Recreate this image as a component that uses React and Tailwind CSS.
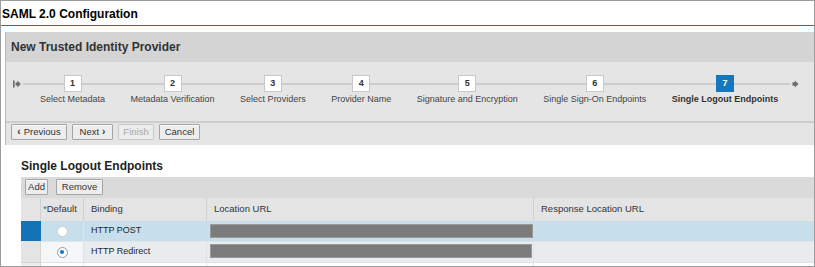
import React from "react";

const steps = [
  { n: 1, label: "Select Metadata" },
  { n: 2, label: "Metadata Verification" },
  { n: 3, label: "Select Providers" },
  { n: 4, label: "Provider Name" },
  { n: 5, label: "Signature and Encryption" },
  { n: 6, label: "Single Sign-On Endpoints" },
  { n: 7, label: "Single Logout Endpoints", active: true },
];

const StartIcon = () => (
  <svg width="8" height="8" viewBox="0 0 8 8" className="shrink-0">
    <rect x="0" y="0.5" width="1.6" height="7" fill="#6b6b6b" />
    <path d="M2.6 2.6 H4.4 V0.6 L7.8 4 L4.4 7.4 V5.4 H2.6 Z" fill="#6b6b6b" />
  </svg>
);

const EndIcon = () => (
  <svg width="7" height="8" viewBox="0 0 7 8" className="shrink-0">
    <path d="M0.5 2.2 H2.8 V0.6 L6.5 4 L2.8 7.4 V5.8 H0.5 Z" fill="#6b6b6b" />
  </svg>
);

const Btn = ({ children, className = "", disabled }) => (
  <button
    className={
      "h-[16px] flex items-center justify-center border rounded-[1px] text-[9.5px] leading-none " +
      (disabled
        ? "border-[#c9c9c9] bg-[#ececec] text-[#a8a8a8] "
        : "border-[#a6a6a6] bg-[#ededed] text-[#333] shadow-[inset_0_1px_0_#fafafa] ") +
      className
    }
  >
    {children}
  </button>
);

const Radio = ({ checked }) => (
  <span
    className={
      "w-[11px] h-[11px] rounded-full bg-white border flex items-center justify-center " +
      (checked ? "border-[#9b9b9b]" : "border-[#cfcfcf]")
    }
  >
    {checked && <span className="w-[4px] h-[4px] rounded-full bg-[#1a73b8]" />}
  </span>
);

export default function App() {
  return (
    <div className="w-[815px] h-[267px] overflow-hidden border border-[#9c9c9c] bg-white font-['Liberation_Sans',Arial,sans-serif] text-[#333]">
      <div className="h-[24px] pl-[1px] pt-[6px] text-[12px] font-bold leading-[14px] text-black">
        SAML 2.0 Configuration
      </div>
      <div className="h-[1px] bg-[#1a70b9]" />

      {/* wizard panel */}
      <div className="mt-[6px] ml-[4px] border-l border-[#b8b8b8]">
        <div className="h-[30px] bg-[#d4d4d4] flex items-center pl-[5px] text-[12px] font-bold text-[#333]">
          New Trusted Identity Provider
        </div>
        <div className="bg-[#e5e5e5]">
          <div className="relative h-[59px]">
            <div className="absolute left-[7px] right-[15px] top-[18px] h-[8px] flex items-center">
              <StartIcon />
              <div className="flex-1 h-[2px] bg-[#cdcdcd] mx-[2px]" />
              <EndIcon />
            </div>
            <div className="relative flex pl-[34px] pt-[13px] gap-[25.5px]">
              {steps.map((s) => (
                <div key={s.n} className="flex flex-col items-center">
                  <div
                    className={
                      "w-[18px] h-[17px] border flex items-center justify-center text-[9px] font-bold " +
                      (s.active
                        ? "bg-[#1677bd] border-[#1677bd] text-white"
                        : "bg-white border-[#c8c8c8] text-[#333]")
                    }
                  >
                    {s.n}
                  </div>
                  <div
                    className={
                      "mt-[2px] text-[9px] leading-[11px] whitespace-nowrap " +
                      (s.active ? "font-bold text-[#333]" : "text-[#444]")
                    }
                  >
                    {s.label}
                  </div>
                </div>
              ))}
            </div>
          </div>
          <div className="border-t-2 border-[#cdcdcd] h-[24px] flex items-start pt-[1px] pl-[5px] gap-[5px]">
            <Btn className="w-[56px] gap-[3px]">
              <span className="font-bold text-[10px]">‹</span>Previous
            </Btn>
            <Btn className="w-[41px] gap-[3px]">
              Next<span className="font-bold text-[10px]">›</span>
            </Btn>
            <Btn className="w-[36px]" disabled>
              Finish
            </Btn>
            <Btn className="w-[41px]">Cancel</Btn>
          </div>
        </div>
      </div>

      {/* endpoints */}
      <div className="pl-[20px] pt-[14px]">
        <div className="h-[18px] text-[12px] font-bold leading-[14px] text-[#222]">
          Single Logout Endpoints
        </div>
        <div className="h-[21px] bg-[#dadada] flex items-start pt-[2px] pl-[4px] gap-[8px]">
          <Btn className="w-[23px]">Add</Btn>
          <Btn className="w-[47px]">Remove</Btn>
        </div>
        <div className="grid grid-cols-[20px_43px_123px_327px_1fr] text-[9.5px] text-[#333]">
          <div className="h-[23px] bg-[#e4e4e4] border-r border-[#d0d0d0]" />
          <div className="h-[23px] bg-[#e4e4e4] border-r border-[#d0d0d0] flex items-center pl-[2px]">
            <span className="text-[#1a73b8]">*</span>Default
          </div>
          <div className="h-[23px] bg-[#e4e4e4] border-r border-[#d0d0d0] flex items-center pl-[7px]">
            Binding
          </div>
          <div className="h-[23px] bg-[#e4e4e4] border-r border-[#d0d0d0] flex items-center pl-[7px]">
            Location URL
          </div>
          <div className="h-[23px] bg-[#e4e4e4] flex items-center pl-[7px]">
            Response Location URL
          </div>

          {/* row 1 (selected) */}
          <div className="h-[21px] bg-[#1472b7] border-b border-[#dfe6ea]" />
          <div className="h-[21px] bg-[#c7dfeb] border-b border-r border-[#dfe6ea] flex items-center justify-center">
            <Radio />
          </div>
          <div className="h-[21px] bg-[#c7dfeb] border-b border-[#dfe6ea] flex items-center pl-[7px] text-[9px] text-[#1f1f1f]">
            HTTP POST
          </div>
          <div className="h-[21px] bg-[#c7dfeb] border-b border-[#dfe6ea] pl-[3px] pr-[1px] pt-[3px]">
            <div className="h-[14px] bg-[#7b7b7b] border border-[#9a9a9a]" />
          </div>
          <div className="h-[21px] bg-[#c7dfeb] border-b border-[#dfe6ea]" />

          {/* row 2 */}
          <div className="h-[21px] bg-[#e4e4e4] border-b border-r border-[#d6d6d6]" />
          <div className="h-[21px] bg-[#f5f6f7] border-b border-r border-[#dfe3e6] flex items-center justify-center">
            <Radio checked />
          </div>
          <div className="h-[21px] bg-[#e9ecef] border-b border-r border-[#dfe3e6] flex items-center pl-[7px] text-[9px] text-[#1f1f1f]">
            HTTP Redirect
          </div>
          <div className="h-[21px] bg-[#e9ecef] border-b border-r border-[#dfe3e6] pl-[3px] pr-[1px] pt-[2px]">
            <div className="h-[14px] bg-[#7b7b7b] border border-[#9a9a9a]" />
          </div>
          <div className="h-[21px] bg-[#e9ecef] border-b border-[#dfe3e6]" />

          {/* row 3 */}
          <div className="h-[20px] bg-[#ececec] border-r border-[#d6d6d6]" />
          <div className="h-[20px] bg-white border-r border-[#dfe3e6]" />
          <div className="h-[20px] bg-white border-r border-[#dfe3e6]" />
          <div className="h-[20px] bg-white border-r border-[#dfe3e6]" />
          <div className="h-[20px] bg-white" />
        </div>
      </div>
    </div>
  );
}
